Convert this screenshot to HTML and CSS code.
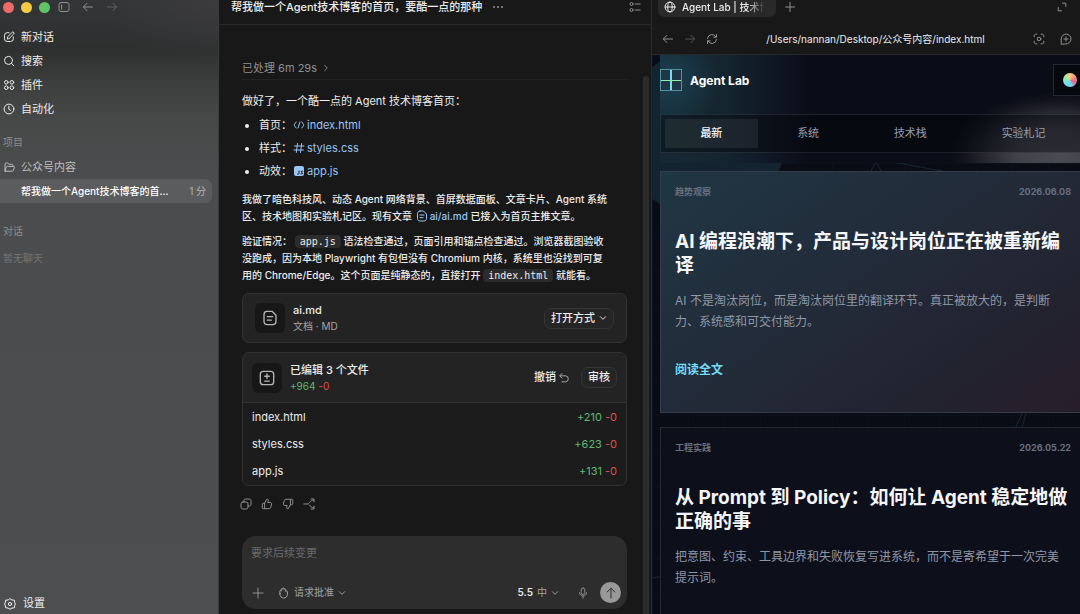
FILE: index.html
```html
<!DOCTYPE html>
<html lang="zh-CN">
<head>
  <meta charset="UTF-8" />
  <meta name="viewport" content="width=device-width, initial-scale=1.0"/>
  <title>帮我做一个Agent技术博客的首页</title>
  <link rel="stylesheet" href="styles.css">
</head>
<body>

<!-- Sidebar -->
<aside class="sidebar">
  <div class="window-bar">
    <span class="light red"></span>
    <span class="light yellow"></span>
    <span class="light green"></span>
    <button class="icon-btn panel-btn" aria-label="侧边栏"><svg class="icon" viewBox="0 0 12 12"><rect x="1" y="1.5" width="10" height="9" rx="2"/><path d="M3.6 3.8v4.4"/></svg></button>
    <button class="icon-btn" aria-label="后退"><svg class="icon" viewBox="0 0 12 12"><path d="M10.5 6h-9M5 2.3 1.4 6 5 9.7"/></svg></button>
    <button class="icon-btn off" aria-label="前进"><svg class="icon" viewBox="0 0 12 12"><path d="M1.5 6h9M7 2.3 10.6 6 7 9.7"/></svg></button>
  </div>

  <nav class="side-nav">
    <a href="#new"><svg class="icon" viewBox="0 0 12 12"><path d="M6 1.7H4.2a2.7 2.7 0 0 0-2.7 2.7v3.4a2.7 2.7 0 0 0 2.7 2.7h3.4a2.7 2.7 0 0 0 2.7-2.7V6M4.4 7.7l.4-2L9 1.4a1.1 1.1 0 0 1 1.7 1.6L6.4 7.3z"/></svg>新对话</a>
    <a href="#search"><svg class="icon" viewBox="0 0 12 12"><circle cx="5.5" cy="5.4" r="4"/><path d="m8.5 8.4 2.3 2.4"/></svg>搜索</a>
    <a href="#plugins"><svg class="icon" viewBox="0 0 12 12"><circle cx="3.3" cy="3.3" r="1.8"/><circle cx="8.9" cy="3.3" r="1.8"/><circle cx="3.3" cy="8.7" r="1.8"/><circle cx="8.9" cy="8.7" r="1.8"/></svg>插件</a>
    <a href="#auto"><svg class="icon" viewBox="0 0 12 12"><circle cx="6" cy="6" r="4.9"/><path d="M5.8 3.2v3l1.8 1.1"/></svg>自动化</a>
  </nav>

  <h2 class="side-title">项目</h2>
  <nav class="side-nav projects">
    <a href="#project" class="folder"><svg class="icon" viewBox="0 0 12 12"><path d="M2 10V3.2c0-.8.5-1.2 1.2-1.2h1.5l1.4 1.3h2.7c.8 0 1.2.4 1.2 1.2v.9M2.2 10.2h7c.6 0 1-.3 1.2-.8l1-3c.2-.6-.1-1-.7-1H4.4c-.6 0-.9.2-1.1.7L1.9 9.4c-.2.5 0 .8.3.8z"/></svg>公众号内容</a>
    <a href="#chat" class="active"><span>帮我做一个Agent技术博客的首...</span><time>1 分</time></a>
  </nav>

  <h2 class="side-title chats">对话</h2>
  <p class="side-empty">暂无聊天</p>

  <a href="#settings" class="settings"><svg class="icon" viewBox="0 0 12 12"><path d="M6 .8 8 2l2.3.1.3 2.1L11.4 6l-.8 1.8-.3 2.1L8 10 6 11.2 4 10l-2.3-.1-.3-2.1L.6 6l.8-1.8.3-2.1L4 2z"/><circle cx="6" cy="6" r="1.6"/></svg>设置</a>
</aside>

<!-- Chat -->
<main class="chat">
  <header class="chat-head">
    <h1>帮我做一个Agent技术博客的首页，要酷一点的那种</h1>
    <button class="icon-btn" aria-label="更多"><svg class="icon solid" viewBox="0 0 12 12"><circle cx="2" cy="6" r="1"/><circle cx="6" cy="6" r="1"/><circle cx="10" cy="6" r="1"/></svg></button>
    <button class="icon-btn outline" aria-label="摘要"><svg class="icon" viewBox="0 0 12 12"><circle cx="2.5" cy="3" r="1.5"/><circle cx="2.5" cy="9" r="1.5"/><path d="M6.2 3h5M6.2 9h5"/></svg></button>
  </header>

  <div class="thread">
    <button class="processed">已处理 6m 29s <svg class="icon small" viewBox="0 0 12 12"><path d="m4 2 4 4-4 4"/></svg></button>

    <p class="lead">做好了，一个酷一点的 Agent 技术博客首页：</p>
    <ul class="file-links">
      <li>首页：<a href="#index"><svg class="icon" viewBox="0 0 12 12"><path d="M3.2 3C1.7 3.3 2.4 5.4.9 6c1.5.6.8 2.7 2.3 3M8.8 3c1.5.3.8 2.4 2.3 3-1.5.6-.8 2.7-2.3 3M7 3 5 9"/></svg>index.html</a></li>
      <li>样式：<a href="#styles"><svg class="icon" viewBox="0 0 12 12"><path d="M4.5 1.5 3.3 10.5M8.7 1.5 7.5 10.5M1.5 4h9.5M1 8h9.5"/></svg>styles.css</a></li>
      <li>动效：<a href="#app"><svg class="icon js" viewBox="0 0 12 12"><rect x="1" y="1" width="10" height="10" rx="2"/><path d="M6 6v2.6q0 .8-1.4.6M9.8 6.3c-2-.6-2.2.9-.9 1.2 1.4.4.9 2-1.1 1.4"/></svg>app.js</a></li>
    </ul>

    <p>我做了暗色科技风、动态 Agent 网络背景、首屏数据面板、文章卡片、Agent 系统<br>区、技术地图和实验札记区。现有文章 <a href="#ai"><svg class="icon" viewBox="0 0 12 12"><path d="M4 1h3.5L10.5 4v4.3C10.5 10 9.6 11 8 11H4C2.4 11 1.5 10 1.5 8.3V3.7C1.5 2 2.4 1 4 1zM4 5h4M4 7.7h3"/></svg>ai/ai.md</a> 已接入为首页主推文章。</p>
    <p>验证情况： <code>app.js</code> 语法检查通过，页面引用和锚点检查通过。浏览器截图验收<br>没跑成，因为本地 Playwright 有包但没有 Chromium 内核，系统里也没找到可复<br>用的 Chrome/Edge。这个页面是纯静态的，直接打开 <code>index.html</code> 就能看。</p>

    <section class="card doc-card">
      <span class="tile"><svg class="icon large" viewBox="0 0 12 12"><path d="M3.5 1h4L10.5 4v4.5c0 1.6-.8 2.5-2.5 2.5H4c-1.7 0-2.5-.9-2.5-2.5v-5C1.5 2 2.3 1 3.5 1zM4 5h4M4 7.6h3"/></svg></span>
      <div class="info">
        <h3>ai.md</h3>
        <p>文档 · MD</p>
      </div>
      <button class="pill">打开方式 <svg class="icon small" viewBox="0 0 12 12"><path d="m2 4 4 4 4-4"/></svg></button>
    </section>

    <section class="card">
      <div class="edit-head">
        <span class="tile"><svg class="icon large" viewBox="0 0 12 12"><rect x="1" y="1" width="10" height="10" rx="2.2"/><path d="M6 3v3.4M4.3 4.7h3.4M4.3 8.4h3.4"/></svg></span>
        <div class="info">
          <h3>已编辑 3 个文件</h3>
          <p><span class="add">+964</span> <span class="del">-0</span></p>
        </div>
        <button class="undo">撤销 <svg class="icon" viewBox="0 0 12 12"><path d="M4 1.5 1.7 3.8 4 6.1M2 3.8h5.3a3 3 0 0 1 0 6H4"/></svg></button>
        <button class="pill">审核</button>
      </div>
      <table class="files">
        <tr><td>index.html</td><td><span class="add">+210</span> <span class="del">-0</span></td></tr>
        <tr><td>styles.css</td><td><span class="add">+623</span> <span class="del">-0</span></td></tr>
        <tr><td>app.js</td><td><span class="add">+131</span> <span class="del">-0</span></td></tr>
      </table>
    </section>

    <div class="actions">
      <button class="icon-btn" aria-label="复制"><svg class="icon" viewBox="0 0 12 12"><rect x="1" y="4" width="7" height="7" rx="1.8"/><path d="M4 4V2.8C4 1.6 4.6 1 5.8 1h3.4C10.4 1 11 1.6 11 2.8v3.4C11 7.4 10.4 8 9.2 8H8"/></svg></button>
      <button class="icon-btn" aria-label="赞"><svg class="icon" viewBox="0 0 12 12"><path d="M3.6 5.2 6 1c1.2.2 1.5 1 1.2 2l-.4 1.5h2.5c1 0 1.5.7 1.3 1.6l-.8 3.2c-.2.9-.8 1.4-1.7 1.4H3.6M3.6 5.2v5.5H2.2c-.6 0-.9-.3-.9-.9V6.1c0-.6.3-.9.9-.9z"/></svg></button>
      <button class="icon-btn" aria-label="踩"><svg class="icon" viewBox="0 0 12 12"><path d="M8.4 6.8 6 11c-1.2-.2-1.5-1-1.2-2l.4-1.5H2.7c-1 0-1.5-.7-1.3-1.6l.8-3.2c.2-.9.8-1.4 1.7-1.4h4.5M8.4 6.8V1.3h1.4c.6 0 .9.3.9.9v3.7c0 .6-.3.9-.9.9z"/></svg></button>
      <button class="icon-btn" aria-label="分支"><svg class="icon" viewBox="0 0 12 12"><path d="M.8 6h3.4C6.5 6 6.5 2.2 10.5 2.2M8 1h3v2.7M6.2 6.8c1.4 1.3 2 2.9 4.6 3M8 11h3V8.2"/></svg></button>
    </div>
  </div>

  <form class="composer">
    <textarea rows="1" aria-label="要求后续变更" placeholder="要求后续变更"></textarea>
    <div class="tools">
      <button type="button" class="icon-btn" aria-label="添加"><svg class="icon" viewBox="0 0 12 12"><path d="M6 1v10M1 6h10"/></svg></button>
      <button type="button" class="tool approve"><svg class="icon" viewBox="0 0 12 12"><path d="M1.9 6.7V4.2c0-.9 1.2-.9 1.3 0V2.3c.1-.9 1.4-.9 1.5 0v-.8c.1-.8 1.4-.8 1.5 0v.9c.2-.8 1.5-.7 1.5.2v1.8c.3-.8 1.7-.6 1.7.3v2.4c0 2.4-1.6 4-3.8 4-2 0-3.7-1.6-3.7-4.4z"/></svg>请求批准<svg class="icon small" viewBox="0 0 12 12"><path d="m2 4 4 4 4-4"/></svg></button>
      <button type="button" class="tool model"><b>5.5</b> 中<svg class="icon small" viewBox="0 0 12 12"><path d="m2 4 4 4 4-4"/></svg></button>
      <button type="button" class="icon-btn mic" aria-label="语音"><svg class="icon" viewBox="0 0 12 12"><rect x="4.2" y="1" width="3.6" height="6.4" rx="1.8"/><path d="M2.5 5.7c0 4.6 7 4.6 7 0M6 9.2v2"/></svg></button>
      <button class="send" aria-label="发送"><svg class="icon" viewBox="0 0 12 12"><path d="M6 11V1.2M2.2 5 6 1.2 9.8 5"/></svg></button>
    </div>
  </form>
  <div class="scrollbar"></div>
</main>

<!-- Preview browser -->
<section class="browser">
  <div class="tabs">
    <a href="#tab" class="tab"><svg class="icon" viewBox="0 0 12 12"><circle cx="6" cy="6" r="4.9"/><ellipse cx="6" cy="6" rx="2.2" ry="4.9"/><path d="M1.1 6h9.8"/></svg><span>Agent Lab | 技术博</span></a>
    <button class="icon-btn" aria-label="新标签页"><svg class="icon" viewBox="0 0 12 12"><path d="M6 1.5v9M1.5 6h9"/></svg></button>
    <button class="icon-btn expand" aria-label="展开"><svg class="icon" viewBox="0 0 12 12"><path d="M6.5 2.2h3.3v3.3M2.2 6.5v3.3h3.3"/></svg></button>
  </div>
  <div class="address">
    <button class="icon-btn" aria-label="后退"><svg class="icon" viewBox="0 0 12 12"><path d="M10.5 6h-9M5 2.3 1.4 6 5 9.7"/></svg></button>
    <button class="icon-btn off" aria-label="前进"><svg class="icon" viewBox="0 0 12 12"><path d="M1.5 6h9M7 2.3 10.6 6 7 9.7"/></svg></button>
    <button class="icon-btn" aria-label="刷新"><svg class="icon" viewBox="0 0 12 12"><path d="M1.5 5.5A4.5 4.5 0 0 1 10 4M10.5 1.5V4.2H7.8M10.5 6.5A4.5 4.5 0 0 1 2 8M1.5 10.5V7.8h2.7"/></svg></button>
    <input type="text" aria-label="地址" value="/Users/nannan/Desktop/公众号内容/index.html">
    <button class="icon-btn" aria-label="截图"><svg class="icon" viewBox="0 0 12 12"><path d="M1.2 3.8V3c0-1.1.7-1.8 1.8-1.8h.8M8.2 1.2H9c1.1 0 1.8.7 1.8 1.8v.8M10.8 8.2V9c0 1.1-.7 1.8-1.8 1.8h-.8M3.8 10.8H3c-1.1 0-1.8-.7-1.8-1.8v-.8"/><circle cx="6" cy="6" r="1.8"/></svg></button>
    <button class="icon-btn comment" aria-label="评论"><svg class="icon" viewBox="0 0 12 12"><path d="M1.2 10.9V6A4.9 4.9 0 1 1 6 10.9zM6 4v4M4 6h4"/></svg></button>
  </div>

  <div class="page">
    <svg class="network" viewBox="0 0 429 559" preserveAspectRatio="xMinYMin slice" aria-hidden="true">
      <path class="shape" d="M0 12 18 0H134L130 108 122 128 60 180 0 144z"/>
      <path d="M212 128 224 107 236 128M240 107 290 116M360 380 373 352M368 380 379 340M0 523 60 514"/>
    </svg>
    <div class="page-inner">
      <header class="site-head">
        <div class="brand-row">
          <a href="#home" class="brand"><span class="logo"></span>Agent Lab</a>
          <button class="theme" aria-label="主题"><span class="wheel"></span></button>
        </div>
        <nav class="site-nav">
          <a href="#latest" class="current">最新</a>
          <a href="#systems">系统</a>
          <a href="#stack">技术栈</a>
          <a href="#lab">实验札记</a>
        </nav>
      </header>

      <article class="post featured">
        <div class="meta"><span>趋势观察</span><time>2026.06.08</time></div>
        <h2>AI 编程浪潮下，产品与设计岗位正在被重新编译</h2>
        <p>AI 不是淘汰岗位，而是淘汰岗位里的翻译环节。真正被放大的，是判断力、系统感和可交付能力。</p>
        <a href="#read">阅读全文</a>
      </article>

      <article class="post">
        <div class="meta"><span>工程实践</span><time>2026.05.22</time></div>
        <h2>从 Prompt 到 Policy：如何让 Agent 稳定地做正确的事</h2>
        <p>把意图、约束、工具边界和失败恢复写进系统，而不是寄希望于一次完美提示词。</p>
      </article>
    </div>
  </div>
</section>

</body>
</html>
```
FILE: styles.css
```css
* {
  box-sizing: border-box;
}

body {
  margin: 0;
  height: 100vh;
  display: grid;
  grid-template-columns: 219px minmax(0, 432fr) minmax(0, 429fr);
  overflow: hidden;
  background: #181818;
  color: #ececec;
  font-family: Inter, "Noto Sans CJK SC", sans-serif;
  font-size: 11px;
  line-height: 17px;
}

h1, h2, h3, p, ul {
  margin: 0;
  padding: 0;
}

a {
  color: inherit;
  text-decoration: none;
}

button, input, textarea {
  font: inherit;
  color: inherit;
  border: 0;
  padding: 0;
  background: none;
}

.icon {
  width: 12px;
  height: 12px;
  flex: none;
  fill: none;
  stroke: currentColor;
  stroke-width: 1;
  stroke-linecap: round;
  stroke-linejoin: round;
}

.icon.small {
  width: 8px;
  height: 8px;
  stroke-width: 1.4;
}

.icon.large {
  width: 16px;
  height: 16px;
}

.icon.solid {
  fill: currentColor;
  stroke: none;
}

.icon-btn {
  display: flex;
  flex: none;
  color: #8f8f8f;
}

.icon-btn.off {
  opacity: 0.5;
}

/* Sidebar */
.sidebar {
  display: flex;
  flex-direction: column;
  padding-bottom: 2px;
  border-right: 1px solid #3c3c3c;
  background: radial-gradient(120px 60px at 100% 0, #3b3b3e, transparent),
    linear-gradient(#343537, #2e2f2f 50px, #3d3e3e 84px, #474848 120px, #4b4c4d 170px, #4d4e4f);
}

.window-bar {
  display: flex;
  align-items: center;
  gap: 7px;
  height: 14px;
  padding-left: 3px;
}

.light {
  width: 11px;
  height: 11px;
  border-radius: 50%;
}

.red { background: #ed6a66; }
.yellow { background: #f4ca45; }
.green { background: #61c466; }

.window-bar .icon-btn {
  margin-right: 5px;
}

.window-bar .panel-btn {
  margin-left: 1px;
}

.side-nav {
  display: flex;
  flex-direction: column;
  padding-top: 11px;
}

.side-nav a {
  display: flex;
  align-items: center;
  gap: 6px;
  height: 24px;
  padding-left: 3px;
}

.side-title, .side-empty {
  padding: 0 3px;
  font-size: 10px;
  font-weight: 400;
  color: #8d8d8e;
}

.side-title {
  margin-top: 13px;
}

.side-empty {
  margin-top: 10px;
  color: #747576;
}

.side-nav.projects {
  padding-top: 4px;
}

.side-nav .folder {
  color: #bdbdbd;
}

.side-nav a.active {
  justify-content: space-between;
  margin-right: 6px;
  padding: 0 6px 0 21px;
  border-radius: 0 7px 7px 0;
  background: #5b5c5d;
  color: #fff;
  font-size: 10px;
  font-weight: 500;
}

.active time {
  color: #a3a3a3;
}

.side-title.chats {
  margin-top: 20px;
}

.settings {
  display: flex;
  align-items: center;
  gap: 7px;
  margin-top: auto;
  padding-left: 4px;
}

/* Chat */
.chat {
  position: relative;
  display: flex;
  flex-direction: column;
  min-height: 0;
}

.chat-head {
  display: flex;
  align-items: center;
  gap: 10px;
  height: 25px;
  padding: 0 10px 10px 12px;
  border-bottom: 1px solid #292929;
}

.chat-head h1 {
  font-size: 11px;
  font-weight: 500;
  white-space: nowrap;
}

.chat-head .outline {
  margin-left: auto;
}

.scrollbar {
  position: absolute;
  top: 76px;
  bottom: 0;
  right: 2px;
  width: 6px;
  border-radius: 3px 3px 0 0;
  background: #2c2c2c;
}

.thread {
  flex: 1;
  min-height: 0;
  padding: 35px 24px 0 23px;
}

.processed {
  display: flex;
  align-items: center;
  gap: 5px;
  width: 100%;
  height: 20px;
  padding-bottom: 3px;
  border-bottom: 1px solid #232323;
  color: #8f8f8f;
}

.thread > p {
  margin-bottom: 8px;
  font-size: 10px;
  font-weight: 500;
  white-space: nowrap;
}

.thread > .lead {
  margin: 13px 0 7px;
  font-size: 11px;
  font-weight: 400;
}

.thread p a, .file-links a {
  color: #99c5f5;
}

.thread p .icon, .file-links .icon {
  margin: 0 2px 0 1px;
  vertical-align: -2px;
}

.file-links {
  display: grid;
  gap: 6px;
  margin-bottom: 11px;
  padding-left: 17px;
}

.file-links li {
  height: 17px;
}

.icon.js rect {
  fill: #99c5f5;
  stroke: none;
}

.icon.js path {
  stroke: #181818;
}

code {
  padding: 1px 5px;
  border-radius: 4px;
  background: #2c2c2c;
  font-family: "DejaVu Sans Mono", monospace;
  font-size: 10px;
  font-weight: 400;
}

.card {
  overflow: hidden;
  margin: 9px 0;
  border: 1px solid #323232;
  border-radius: 7px;
  background: #1c1c1c;
}

.doc-card, .edit-head {
  display: flex;
  align-items: center;
  height: 50px;
  padding: 0 12px;
  background: #232323;
}

.edit-head {
  padding: 0 9px;
  border-bottom: 1px solid #343434;
}

.tile {
  display: grid;
  place-items: center;
  width: 30px;
  height: 30px;
  margin-right: 8px;
  border-radius: 6px;
  background: #171717;
  color: #b5b5b5;
}

.info {
  flex: 1;
}

.info h3, .info p {
  font-size: 11px;
  font-weight: 500;
  line-height: 16px;
}

.info p {
  font-size: 10px;
  font-weight: 400;
  color: #a5a5a5;
}

.pill {
  display: flex;
  align-items: center;
  gap: 4px;
  padding: 1px 6px;
  border: 1px solid #353535;
  border-radius: 7px;
  background: #252525;
  font-weight: 500;
}

.undo {
  display: flex;
  align-items: center;
  gap: 2px;
  margin-right: 11px;
  font-weight: 500;
}

.undo .icon {
  color: #a5a5a5;
}

.info .add, .add { color: #5fb873; }
.info .del, .del { color: #dd5147; }

.files {
  width: 100%;
  padding-top: 1px;
  border-spacing: 0;
}

.files td {
  height: 27px;
  padding: 0 9px;
}

.files td:last-child {
  text-align: right;
}

.actions {
  display: flex;
  gap: 9px;
  padding-top: 3px;
  margin-left: -2px;
}

.composer {
  display: flex;
  flex-direction: column;
  justify-content: space-between;
  height: 73px;
  margin: 0 24px 5px 23px;
  padding: 9px 6px 6px 9px;
  border-radius: 14px;
  background: #2d2d2d;
}

.composer textarea {
  height: 17px;
  resize: none;
  outline: 0;
  overflow: hidden;
}

.composer textarea::placeholder {
  color: #696969;
}

.tools {
  display: flex;
  align-items: center;
  padding-left: 1px;
}

.tool {
  display: flex;
  align-items: center;
  gap: 4px;
  color: #a3a3a3;
  font-size: 10px;
}

.approve {
  margin-left: 14px;
}

.model {
  margin-left: auto;
}

.model b {
  color: #e5e5e5;
  font-weight: 600;
}

.mic {
  margin: 0 11px 0 18px;
}

.send {
  display: grid;
  place-items: center;
  width: 21px;
  height: 21px;
  border-radius: 50%;
  background: #999;
  color: #2d2d2d;
}

/* Preview browser */
.browser {
  display: flex;
  flex-direction: column;
  min-width: 0;
  min-height: 0;
  border-left: 1px solid #2a2a2a;
}

.tabs {
  display: flex;
  align-items: flex-start;
  gap: 8px;
  height: 24px;
  padding: 0 12px 0 6px;
}

.tabs .icon-btn {
  margin-top: 1px;
}

.tabs .expand {
  margin-left: auto;
}

.tab {
  display: flex;
  align-items: center;
  gap: 6px;
  width: 118px;
  height: 17px;
  padding: 0 6px 3px;
  border-radius: 0 0 7px 7px;
  background: #292929;
  font-size: 10px;
  font-weight: 500;
}

.tab span {
  white-space: nowrap;
  mask-image: linear-gradient(90deg, #000 75%, transparent 95%);
}

.address {
  display: flex;
  align-items: center;
  gap: 10px;
  height: 31px;
  padding: 0 8px 0 10px;
  border-bottom: 1px solid #292929;
}

.address input {
  flex: 1;
  min-width: 0;
  font-size: 10px;
  text-align: center;
}

.address .comment {
  margin-left: 5px;
}

.page {
  position: relative;
  flex: 1;
  min-height: 0;
  overflow: hidden;
  background: repeating-linear-gradient(90deg, #0d101a 0 1px, transparent 1px 36px),
    repeating-linear-gradient(#0d101a 0 1px, transparent 1px 36px),
    #090b15;
}

.network {
  position: absolute;
  inset: 0;
  width: 100%;
  height: 100%;
  fill: none;
  stroke: #182733;
}

.network .shape {
  fill: #132330;
  stroke: none;
}

.page-inner {
  position: relative;
  margin: 0 -6px 0 8px;
}

/* Frosted header over the network drawing */
.site-head {
  height: 108px;
  padding-top: 9px;
  background: radial-gradient(110px 62px at 94% 92%, #4b4b53, #41414a 40%, #262730 68%, #12131d 88%, transparent),
    radial-gradient(50px 50px at 10px 26px, #1d4050, #1d405000),
    linear-gradient(90deg, #152935, #15252f 60px, #101b27 100px, #0a0c17 150px);
}

.brand-row {
  display: flex;
  align-items: center;
  justify-content: space-between;
}

.brand {
  display: flex;
  align-items: center;
  gap: 8px;
  color: #fff;
  font-size: 12px;
  font-weight: 700;
}

.logo {
  width: 22px;
  height: 22px;
  border: 1px solid #4f93a4;
  background: linear-gradient(#90efb2, #90efb2) center / 100% 1px no-repeat,
    linear-gradient(#70dff3, #70dff3) center / 2px 100% no-repeat,
    #203644;
}

.theme {
  display: grid;
  place-items: center;
  width: 33px;
  height: 32px;
  border: 1px solid #242833;
  background: #05080d;
}

.wheel {
  width: 14px;
  height: 14px;
  border-radius: 50%;
  background: conic-gradient(#f5cf7c, #f0897d 70deg, #e8638a 110deg, #75d7f2 170deg, #70e2e4 230deg, #94edae 290deg, #f5cf7c);
}

.site-nav {
  display: flex;
  gap: 4px;
  height: 39px;
  margin-top: 18px;
  padding: 4px;
  border: 1px solid #ffffff18;
  background: #04060b70;
  color: #969cab;
}

.site-nav a {
  flex: 1 1 auto;
  display: grid;
  place-items: center;
}

.site-nav .current {
  background: linear-gradient(90deg, #1e2c31, #1c222c);
  color: #eef1f6;
  font-weight: 500;
}

.post {
  min-height: 242px;
  margin-bottom: 14px;
  padding: 11px 14px;
  border: 1px solid #252934;
  background: #0d0f1a;
}

.site-head + .post {
  margin-top: 8px;
}

.featured {
  border-color: #343c4c;
  background: linear-gradient(145deg, #203643, #222b39 45%, #23222f 78%, #281e2b);
}

.meta {
  display: flex;
  justify-content: space-between;
  color: #687080;
  font-size: 9px;
  font-weight: 700;
}

.post h2 {
  margin: 30px 0 12px;
  color: #f4f6fa;
  font-size: 19px;
  font-weight: 700;
  line-height: 24px;
}

.post p {
  padding-right: 6px;
  color: #8f98a8;
  font-size: 12px;
  line-height: 21px;
}

.post > a {
  display: block;
  margin-top: 29px;
  color: #73dbf5;
  font-size: 12px;
  font-weight: 700;
}
```
